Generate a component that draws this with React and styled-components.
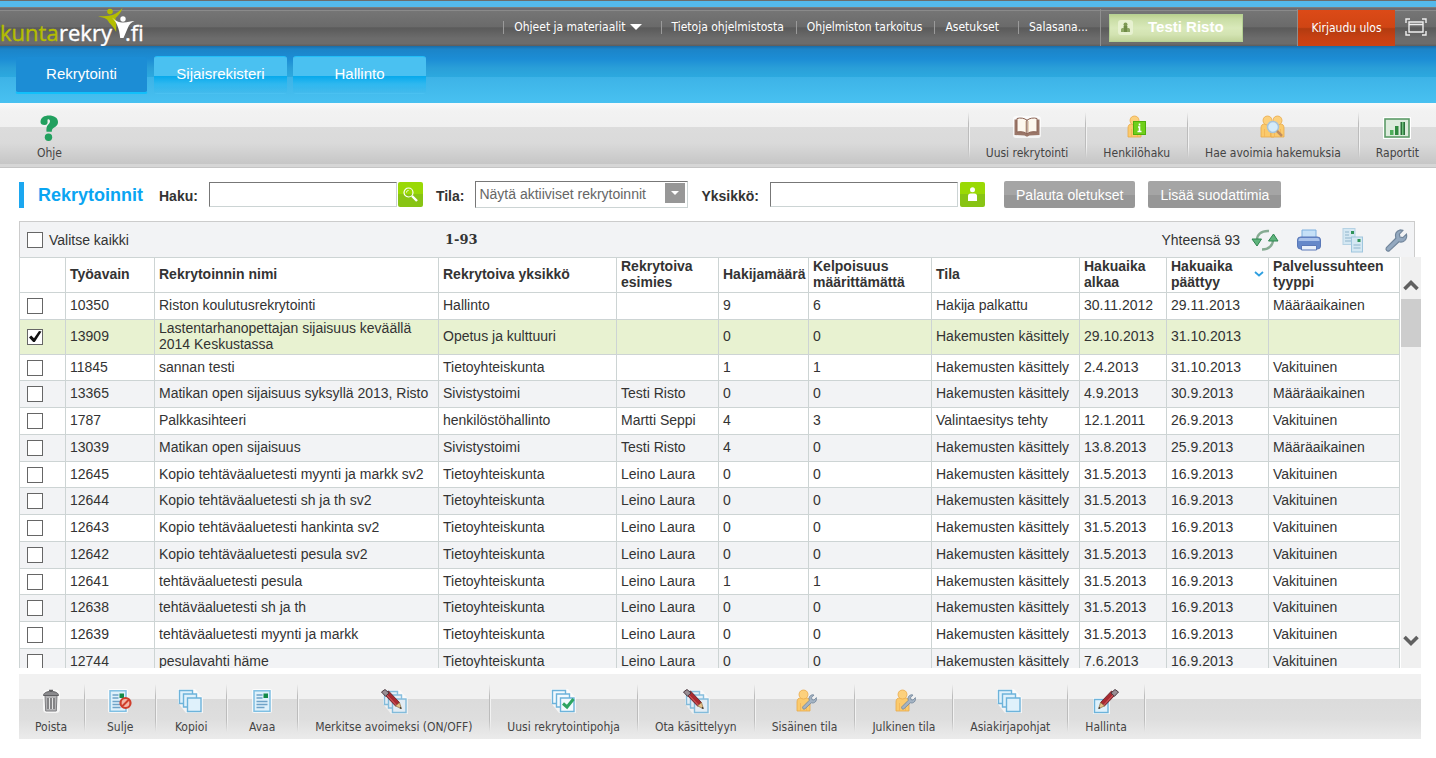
import React from "react";
import styled, { createGlobalStyle, css } from "styled-components";

const GlobalStyle = createGlobalStyle`
  *, *::before, *::after { box-sizing: border-box; }
  body {
    margin: 0;
    background: #fff;
    color: #333;
    font: 14px/16px "Liberation Sans", Arial, sans-serif;
  }
  button, input, select { font: inherit; margin: 0; }
  button { border: 0; padding: 0; background: none; color: inherit; cursor: pointer; }
  svg { display: block; flex: none; }
`;

const uiFont = `"DejaVu Sans Condensed", Tahoma, "DejaVu Sans", sans-serif`;

/* ---------- page frame ---------- */

const Page = styled.div`
  display: flex;
  flex-direction: column;
  height: 100vh;
  min-height: 480px;
  padding-bottom: 19px;
`;

const TopStripe = styled.div`
  flex: none;
  height: 7px;
  background: #54b9ec;
  border-top: 1px solid #6c6c6c;
`;

const Header = styled.header`
  flex: none;
  display: flex;
  justify-content: space-between;
  height: 39px;
  border-top: 1px solid #7d7d7d;
  background: linear-gradient(#6b6b72 0, #6b6b72 2px, #8a8a8a 2px, #8a8a8a 3px, #757575 3px, #6a6a6a 50%, #5a5a5a 52%, #6c6c6c 80%, #6c6c6c 94%, #5c5c5c 100%);
  color: #fff;
  font: 12px/16px ${uiFont};
`;

const TopMenu = styled.nav`
  display: flex;
  align-items: stretch;
`;

const MenuLink = styled.a`
  display: flex;
  align-items: center;
  gap: 4px;
  padding: 0 ${(p) => (p.$wide ? 19 : 12)}px 0 11px;
  color: #fff;
  text-decoration: none;
  white-space: nowrap;
  background: linear-gradient(#9a9a9a, #9a9a9a) left center / 1px 13px no-repeat;
`;

const UserArea = styled.div`
  display: flex;
  align-items: flex-start;
  width: 198px;
  padding: 5px 0 0 8px;
  margin-top: 1px;
  border-left: 1px solid #8f8f8f;
  border-right: 1px solid #8f8f8f;
`;

const UserBadge = styled.div`
  display: flex;
  align-items: center;
  gap: 15px;
  width: 134px;
  height: 28px;
  padding: 0 0 2px 8px;
  border: 1px solid #b5d194;
  background: linear-gradient(#bcd18f, #c9dda5 15%, #d9e9ba 50%, #d3e3b2 75%, #c2d49b);
  color: #fff;
  font: bold 15px/18px "Liberation Sans", Arial, sans-serif;
`;

const LogoutButton = styled.button`
  width: 97px;
  margin-top: 2px;
  background: linear-gradient(#dc4a17, #d04514 48%, #b23b10 52%, #c54013 75%, #cc4214);
  color: #fff;
  white-space: nowrap;
`;

const ScreenButton = styled.button`
  display: grid;
  place-items: center;
  width: 41px;
`;

const TabBar = styled.nav`
  flex: none;
  display: flex;
  gap: 6px;
  height: 57px;
  padding: 10px 15px 9px;
  background: linear-gradient(#1b6ba5 0, #1b84c8 3px, #1c8dd5 13px, #2a9fd8 22px, #2ca9df 31px, #3db3e7 31px, #48c1f1 100%);
`;

const Tab = styled.a`
  width: 133px;
  padding-top: 9px;
  border-radius: 3px;
  color: #fff;
  font-size: 15px;
  line-height: 16px;
  text-align: center;
  text-decoration: none;
  border: 1px solid transparent;
  border-top-color: #22bdf7;
  background: linear-gradient(#4ac1f1 0, #4ac1f1 19px, #06a9ec 19px, #2fb8ef 75%, #45c0f100 100%);
  ${(p) =>
    p.$active &&
    css`
      border-top-color: transparent;
      border-bottom: 2px solid #11c0fb;
      background: #1c8dd5 padding-box;
    `}
`;

/* ---------- icon tool bars ---------- */

const ToolBar = styled.div`
  flex: none;
  display: flex;
  align-items: flex-start;
  height: 65px;
  background: linear-gradient(#fafafa 0, #f2f2f2 8px, #f0f0f0 24px, #dcdcdc 24px, #dadada 40px, #c6c6c6 61px, #d6d6d6 61px, #d6d6d6 64px, #c4c4c4 64px);
`;

const ActionBar = styled(ToolBar)`
  margin: 6px 15px 0 19px;
  background: linear-gradient(#f1f1f1 0, #f1f1f1 25px, #dbdbdb 25px, #dedede 45px, #ebebeb 100%);
`;

const Spacer = styled.div`
  flex: 1;
`;

const ruleLine = "linear-gradient(#c4c4c400, #bcbcbc 25%, #bcbcbc 75%, #c4c4c400)";
const ruleGlow = "linear-gradient(#f6f6f600, #f2f2f2 25%, #f2f2f2 75%, #f6f6f600)";

const Tool = styled.button`
  display: flex;
  flex-direction: column;
  align-items: center;
  gap: 6px;
  height: 62px;
  padding: 12px 17px 0 18px;
  color: #444;
  font: 12px/16px ${uiFont};
  white-space: nowrap;
  background: ${ruleLine} 0 9px / 1px 46px no-repeat, ${ruleGlow} 1px 9px / 1px 46px no-repeat;
`;

const ActionTool = styled(Tool)`
  min-width: 71px;
  padding: 15px 19px 0 16px;
  background: ${ruleLine} calc(100% - 1px) 10px / 1px 48px no-repeat, ${ruleGlow} 100% 10px / 1px 48px no-repeat;
  &:first-child {
    min-width: 0;
  }
`;

const HelpTool = styled(Tool)`
  margin-left: 19px;
  background: none;
`;

/* ---------- filters ---------- */

const FilterRow = styled.form`
  flex: none;
  display: flex;
  align-items: center;
  height: 53px;
  padding-left: 19px;
`;

const Title = styled.h1`
  width: 140px;
  margin: 0;
  padding-left: 14px;
  border-left: 5px solid #1ba7f0;
  color: #0aa5f2;
  font-size: 18px;
  line-height: 26px;
`;

const Label = styled.label`
  margin-right: 11px;
  padding-top: 3px;
  font-weight: bold;
  white-space: nowrap;
`;

const TextInput = styled.input`
  width: 188px;
  height: 25px;
  padding: 0 4px;
  border: 1px solid #ccd4d4;
  border-top-color: #777;
  border-left-color: #777;
  background: #fff;
`;

const GreenButton = styled.button`
  display: grid;
  place-items: center;
  width: 25px;
  height: 25px;
  margin: 0 13px 0 ${(p) => (p.$apart ? 2 : 1)}px;
  border-radius: 2px;
  background: linear-gradient(#9ad905 50%, #88c414 50%);
`;

const SelectBox = styled.div`
  position: relative;
  margin-right: 13px;
`;

const Select = styled.select`
  appearance: none;
  display: block;
  width: 213px;
  height: 27px;
  padding: 0 26px 1px 3px;
  border: 1px solid #ccd4d4;
  border-top-color: #777;
  border-left-color: #777;
  border-radius: 0;
  background: #fff;
  color: #666;
`;

const SelectArrow = styled.span`
  position: absolute;
  top: 2px;
  right: 3px;
  display: grid;
  place-items: center;
  width: 20px;
  height: 20px;
  background: #979797;
  pointer-events: none;
`;

const GreyButton = styled.button`
  height: 27px;
  margin: 0 7px 0 6px;
  padding: 0 12px;
  border-radius: 2px;
  background: linear-gradient(#a5a5a5 50%, #979797 50%);
  color: #fff;
  white-space: nowrap;
`;

/* ---------- list ---------- */

const ListHead = styled.div`
  flex: none;
  display: flex;
  align-items: center;
  height: 36px;
  margin: 0 21px 0 19px;
  padding-left: 7px;
  border: 1px solid #ccc;
  border-bottom: 0;
  background: #f2f3f5;
`;

const SelectAll = styled.label`
  display: flex;
  align-items: center;
  gap: 6px;
  width: 418px;
`;

const Range = styled.strong`
  flex: 1;
  font: bold 13px/16px "DejaVu Serif", serif;
`;

const ListTools = styled.div`
  display: flex;
  align-items: center;
  gap: 16px;
  margin: 0 3px 0 11px;
`;

const ListTool = styled.button`
  display: block;
`;

const CheckWrap = styled.span`
  position: relative;
  display: block;
  width: 16px;
  height: 16px;
  svg {
    position: absolute;
    inset: 0;
    display: none;
    pointer-events: none;
  }
  input:checked + svg {
    display: block;
  }
`;

const CheckInput = styled.input`
  appearance: none;
  display: block;
  width: 16px;
  height: 16px;
  border: 1px solid #666;
  background: #fff;
`;

const ListBody = styled.div`
  flex: 1;
  display: flex;
  gap: 1px;
  min-height: 0;
  margin: 0 15px 0 19px;
`;

const TableView = styled.div`
  flex: 1;
  min-width: 0;
  overflow: hidden;
`;

const Table = styled.table`
  width: 100%;
  table-layout: fixed;
  border-collapse: separate;
  border-spacing: 0;
  border: 1px solid #cdd4d4;
  border-width: 1px 0 0 1px;
`;

const cell = css`
  padding: 0 4px 2px;
  border: 1px solid #cdd4d4;
  border-width: 0 1px 1px 0;
  text-align: left;
  vertical-align: middle;
`;

const Th = styled.th`
  ${cell}
  height: 35px;
`;

const Td = styled.td`
  ${cell}
`;

const CheckTd = styled(Td)`
  padding: 0 0 0 7px;
`;

const SortHead = styled.span`
  display: flex;
  align-items: center;
  justify-content: space-between;
`;

const Row = styled.tr`
  height: 27px;
  background: #fff;
  &:nth-child(even) {
    background: #f2f3f5;
  }
  &:nth-child(4n + 3) {
    height: 26px;
  }
  &&:has(input:checked) {
    background: #e8f2d1;
  }
`;

const ScrollBar = styled.div`
  flex: none;
  display: flex;
  flex-direction: column;
  width: 20px;
  padding: 18px 0 17px;
  background: #f0f0f0;
`;

const ScrollButton = styled.button`
  display: grid;
  place-items: center;
  height: 20px;
`;

const ScrollTrack = styled.div`
  flex: 1;
  padding-top: 4px;
`;

const ScrollThumb = styled.div`
  height: 48px;
  background: #cdcdcd;
`;

/* ---------- drawings ---------- */

const Logo = () => (
  <svg width="146" height="38" viewBox="0 8 146 38" role="img" aria-label="kuntarekry.fi">
    <g fontFamily="'Open Sans', 'Noto Sans', sans-serif" fontSize="22" strokeWidth=".4">
      <text x="0" y="41" fill="#b4bd00" stroke="#b4bd00">kunta</text>
      <text x="59" y="41" fill="#fff" stroke="#fff">rekry</text>
      <text x="125" y="41" fill="#fff" stroke="#fff">.fi</text>
    </g>
    <circle cx="110" cy="11.500" r="2.800" fill="#b4bd00" />
    <path d="M98 16.500c4-.6 8-.2 11-.8 6-1 9.500-3.500 13.500-7.700-1.500 4.500-3.500 7-7 10 .5 3.500.8 8 .7 14-2.200-4-4.500-7-7.200-9.500-1-3-4-5-11-6z" fill="#b4bd00" />
    <circle cx="123" cy="19" r="2.700" fill="#fff" />
    <path d="M112 17.500c4 4 7 5 11.500 5 4 0 7.500-1.200 11-1.500-3.500 1.800-5.500 3.500-6.500 6.500L123.500 38h-3.300c-.5-5-1.200-8.500-2.700-12-1-3-3-6-5.500-8.500z" fill="#fff" />
  </svg>
);

const Caret = ({ w = 12, h = 6 }) => (
  <svg width={w} height={h} viewBox="0 0 12 6">
    <path d="M0 0h12L6 6z" fill="#fff" />
  </svg>
);

const BadgeIcon = () => (
  <svg width="15" height="15" viewBox="0 0 15 15">
    <rect width="15" height="15" rx="3" fill="#e7f1d0" />
    <circle cx="7.500" cy="4.500" r="2" fill="#7f9a55" />
    <path d="M3 12V9.500Q3 8 4.500 8h1V6h4v2h1Q12 8 12 9.500V12z" fill="#8ca664" />
    <path d="M6 6h3v6H6z" fill="#6f8b46" />
  </svg>
);

const ScreenIcon = () => (
  <svg width="22" height="18" viewBox="0 0 22 18" fill="none" stroke="#eee" strokeWidth="1.400">
    <path d="M1 5V1h4M17 1h4v4M21 13v4h-4M5 17H1v-4" />
    <path d="M4 4h14v10H4zM4 6.500h14" />
  </svg>
);

const HelpIcon = () => (
  <svg width="24" height="26" viewBox="0 0 24 26">
    <circle cx="11.500" cy="22.300" r="3.700" fill="#22a05f" />
    <path d="M3.500 7C3.500 2.500 7.500.5 12 .5c5 0 9 2.300 9 6.500 0 3.500-2.500 4.800-4.500 6-1.500 1-1.500 1.500-1.700 3.700H9.500c-.3-4.500.5-6 2-7.500 1.300-1.200 1.800-2.700 1.300-4-.8-1.300-2.500-1-2.300.3.500 3-.5 4.500-3 4.500C5 10 3.500 9 3.500 7z" fill="#22a05f" />
  </svg>
);

const BookIcon = () => (
  <svg width="28" height="24" viewBox="0 0 28 24">
    <rect x="0" y="1" width="28" height="22" rx="3" fill="#fff" opacity=".7" />
    <path d="M1.500 4.500h25V20l-10 .5-2.500 1.200-2.500-1.200-10-.5z" fill="#9a7668" />
    <path d="M14 5.500c-2-2.500-7-3-10-2V17c4-.7 8-.3 10 2z" fill="#fdf7ee" stroke="#8a6355" />
    <path d="M14 5.500c2-2.500 7-3 10-2V17c-4-.7-8-.3-10 2z" fill="#fdf7ee" stroke="#8a6355" />
    <path d="M12.500 6v11M15.500 6v11" stroke="#e6d3bd" />
  </svg>
);

const Person = ({ x = 0 }) => (
  <g transform={`translate(${x} 0)`} fill="#fbca6c" stroke="#e9a94a" strokeWidth=".8">
    <path d="M0 22v-9c0-3 1.500-4 3.500-4h6c2 0 3.500 1 3.500 4v9z" />
    <circle cx="6.500" cy="5.500" r="4.500" fill="#fcd07c" />
    <path d="M3.500 14v8M9.500 14v8" stroke="#f3b455" fill="none" />
  </g>
);

const PersonInfoIcon = () => (
  <svg width="24" height="24" viewBox="0 0 24 24">
    <Person x={3} />
    <rect x="8.500" y="6.500" width="12" height="13" fill="#6fcf1a" stroke="#4fae0c" />
    <path d="M14.500 8.500v2M13 12h1.500v4.500M12.500 16.500h4" stroke="#fff" strokeWidth="1.600" fill="none" />
  </svg>
);

const PeopleSearchIcon = () => (
  <svg width="26" height="24" viewBox="0 0 26 24">
    <Person x={1} />
    <Person x={11} />
    <circle cx="13" cy="12" r="5.500" fill="#d3ebfa" stroke="#a8c3d8" strokeWidth="1.500" />
    <path d="M17 16l5 5" stroke="#c08d5e" strokeWidth="2.500" />
  </svg>
);

const ChartIcon = () => (
  <svg width="28" height="24" viewBox="0 0 28 24">
    <rect x="0" y="2" width="28" height="22" fill="#fff" />
    <rect x="2" y="4" width="24" height="18" fill="#dcebdc" stroke="#5d9b68" strokeWidth="1.600" />
    <path d="M7 15h3.500v5H7z" fill="#4fae5b" />
    <path d="M12 11h3.500v9H12z" fill="#2f8a3e" />
    <path d="M17.500 7H22v13h-4.500z" fill="#2b6f3a" />
    <path d="M19 7h1.500v13H19z" fill="#6dc07a" />
  </svg>
);

const TrashIcon = () => (
  <svg width="24" height="24" viewBox="0 0 24 24">
    <rect x="4" y="1" width="17" height="23" rx="4" fill="#fff" opacity=".7" />
    <path d="M6 6h12l-.7 16H6.700z" fill="#b4b4b6" stroke="#7d7d80" />
    <path d="M9 9v11M12 9v11M15 9v11" stroke="#6a6a6d" strokeWidth="1.300" />
    <path d="M10.500 9v11M13.500 9v11" stroke="#e2e2e2" />
    <path d="M4.500 6.500C4.500 4 7.500 2.500 12 2.500s7.500 1.500 7.500 4z" fill="#8b8b8e" stroke="#5f5f62" />
    <path d="M10 1.500h4" stroke="#5f5f62" strokeWidth="1.500" />
  </svg>
);

const Doc = ({ x = 3 }) => (
  <g transform={`translate(${x} 1)`}>
    <rect x="-1" y="-1" width="20" height="24" rx="2" fill="#fff" opacity=".8" />
    <rect x="1" y=".8" width="16" height="20.500" fill="#dff1fb" stroke="#7fbfe2" strokeWidth="1.500" />
    <path d="M3.500 5h6M3.500 8h6M3.500 11.500h11M3.500 14.500h11M3.500 17.500h8" stroke="#6fa3c8" strokeWidth="1.300" />
    <rect x="10.500" y="3.500" width="4.500" height="4.500" fill="#148a48" />
  </g>
);

const CloseDocIcon = () => (
  <svg width="26" height="24" viewBox="0 0 26 24">
    <Doc x={2} />
    <circle cx="18.500" cy="14" r="5" fill="#f4b7a8" stroke="#cf3e2c" strokeWidth="2.200" />
    <path d="M15 17.500l7-7" stroke="#cf3e2c" strokeWidth="2" />
  </svg>
);

const DocIcon = () => (
  <svg width="24" height="24" viewBox="0 0 24 24">
    <Doc />
  </svg>
);

const Sheets = ({ fill = "#dff1fb" }) => (
  <g stroke="#6db3da" strokeWidth="1.400" fill={fill}>
    <path d="M0 0h17l8 9v15H8L0 14z" fill="#fff" stroke="none" opacity=".7" />
    <path d="M1.500 1.500h13v13h-13z" />
    <path d="M5.500 5h13v13h-13z" />
    <path d="M9.500 9h13.500v13.500H9.500z" />
  </g>
);

const CopyIcon = () => (
  <svg width="26" height="25" viewBox="0 0 26 25">
    <Sheets />
  </svg>
);

const CheckSheetsIcon = () => (
  <svg width="26" height="25" viewBox="0 0 26 25">
    <Sheets fill="#f3fafe" />
    <path d="M12 14.500l4 3.500 6.500-8" fill="none" stroke="#2ea561" strokeWidth="3" />
  </svg>
);

const Pencil = () => (
  <g>
    <path d="M4.500 5.500L8.500 2l11 11.500-4 3.500z" fill="#a92a30" stroke="#5c1a22" strokeWidth=".8" />
    <path d="M5.500 4.700l11 11.500" stroke="#d9656a" />
    <path d="M1.500 3L5 .5l4 3.500-3.500 3.300z" fill="#9a8f95" stroke="#4b3840" />
    <path d="M15.500 17l4-3.500 1.800 6z" fill="#e8c389" stroke="#8a6a3f" strokeWidth=".7" />
    <path d="M21.500 20l-2-.8 1.500-1.400z" fill="#222" />
  </g>
);

const PencilSheetsIcon = () => (
  <svg width="28" height="25" viewBox="0 0 28 25">
    <g transform="translate(3 1)" opacity=".8">
      <Sheets fill="#e4f0fa" />
    </g>
    <Pencil />
  </svg>
);

const EditIcon = () => (
  <svg width="28" height="26" viewBox="0 0 28 26">
    <rect x="1" y="9" width="17" height="16" fill="#fff" opacity=".7" />
    <rect x="2.500" y="10.500" width="13.500" height="13" fill="#dff1fb" stroke="#6db3da" strokeWidth="1.400" />
    <g transform="translate(28 0) scale(-1 1)">
      <Pencil />
    </g>
  </svg>
);

const WrenchPath = ({ fill = "#a4b3c3" }) => (
  <path d="M3.500 18.500l8-8C10.500 7 12 4.500 15 3.500c1 0 2 0 2.500.3l-3 3.200.5 2.500 2.500.5 3-3c.5 2 0 4-1.500 5.500-1.500 1.300-3 1.500-4.800 1L6 21.200c-1.800 1-3.500-1-2.500-2.700z" fill={fill} stroke="#71859b" />
);

const PersonWrenchIcon = () => (
  <svg width="24" height="24" viewBox="0 0 24 24">
    <Person x={4} />
    <g transform="translate(7 3) scale(.8)">
      <WrenchPath />
    </g>
  </svg>
);

const RefreshIcon = () => (
  <svg width="28" height="24" viewBox="0 0 28 24" fill="none">
    <path d="M6 12c0-5 4-9.500 12-9" stroke="#86ab92" strokeWidth="2.400" />
    <path d="M1 11h9.500L6 18z" fill="#5fb47c" stroke="#2f8450" />
    <path d="M22 12c0 5-4 9.500-11 9.500" stroke="#86ab92" strokeWidth="2.400" />
    <path d="M17.500 13H27l-4.500-7z" fill="#5fb47c" stroke="#2f8450" />
  </svg>
);

const PrintIcon = () => (
  <svg width="28" height="24" viewBox="0 0 28 24">
    <path d="M7 2h14v9H7z" fill="#c5e0f7" stroke="#7fb0de" />
    <path d="M2.500 12q0-3 3-3h17q3 0 3 3v6q0 3-3 3h-17q-3 0-3-3z" fill="#6588c9" stroke="#5a78b8" />
    <path d="M3.500 12q0-2 2-2h17q2 0 2 2v1h-21z" fill="#a9c2ea" />
    <path d="M6.500 17.500h15V22h-15z" fill="#e9f0fa" stroke="#5a78b8" />
  </svg>
);

const ExportIcon = () => (
  <svg width="28" height="26" viewBox="0 0 28 26">
    <rect x="4" y="1.500" width="12" height="16" fill="#d5e8f3" stroke="#b5d2e4" />
    <path d="M6 5h4M6 8h4M6 11h8M6 14h8" stroke="#8fb4cb" />
    <rect x="12" y="4" width="3" height="3" fill="#2f9458" />
    <rect x="12.500" y="10" width="11" height="15" fill="#d5e8f3" stroke="#9fc6de" />
    <path d="M14.500 18h7M14.500 21h7" stroke="#8fb4cb" />
    <rect x="18.500" y="12" width="3" height="3" fill="#2f9458" />
  </svg>
);

const WrenchIcon = () => (
  <svg width="28" height="26" viewBox="1 1 23 22">
    <WrenchPath fill="#94a9c0" />
  </svg>
);

const SearchIcon = () => (
  <svg width="15" height="15" viewBox="0 0 15 15" fill="none" stroke="#fff">
    <circle cx="5.500" cy="5.500" r="4.500" strokeWidth="1.200" />
    <path d="M3.500 5.500c0-1.200.8-2 2-2" />
    <path d="M9 9l5 5" strokeWidth="2.400" />
  </svg>
);

const UnitIcon = () => (
  <svg width="11" height="15" viewBox="0 0 11 15" fill="#fff">
    <circle cx="5.500" cy="2.800" r="2.500" />
    <path d="M1 14V9q0-2.500 2.500-2.500h4Q10 6.500 10 9v5z" />
  </svg>
);

const SortIcon = () => (
  <svg width="10" height="6" viewBox="0 0 10 6" fill="none" stroke="#2e9fe0" strokeWidth="1.800">
    <path d="M1 1l4 3.500L9 1" />
  </svg>
);

const ScrollChevron = ({ up }) => (
  <svg width="16" height="12" viewBox="0 0 16 12" fill="none" stroke="#606060" strokeWidth="3.600">
    <path d={up ? "M1.500 10L8 3.500l6.500 6.500" : "M1.500 2L8 8.500 14.500 2"} />
  </svg>
);

/* ---------- data ---------- */

const columns = [
  { label: "", width: 46 },
  { label: "Työavain", width: 89 },
  { label: "Rekrytoinnin nimi" },
  { label: "Rekrytoiva yksikkö", width: 178 },
  { label: "Rekrytoiva esimies", width: 102 },
  { label: "Hakijamäärä", width: 90 },
  { label: "Kelpoisuus määrittämättä", width: 123 },
  { label: "Tila", width: 148 },
  { label: "Hakuaika alkaa", width: 87 },
  { label: "Hakuaika päättyy", width: 102, sorted: true },
  { label: "Palvelussuhteen tyyppi", width: 131 },
];

const rows = [
  ["10350", "Riston koulutusrekrytointi", "Hallinto", "", "9", "6", "Hakija palkattu", "30.11.2012", "29.11.2013", "Määräaikainen"],
  ["13909", "Lastentarhanopettajan sijaisuus keväällä 2014 Keskustassa", "Opetus ja kulttuuri", "", "0", "0", "Hakemusten käsittely", "29.10.2013", "31.10.2013", ""],
  ["11845", "sannan testi", "Tietoyhteiskunta", "", "1", "1", "Hakemusten käsittely", "2.4.2013", "31.10.2013", "Vakituinen"],
  ["13365", "Matikan open sijaisuus syksyllä 2013, Risto", "Sivistystoimi", "Testi Risto", "0", "0", "Hakemusten käsittely", "4.9.2013", "30.9.2013", "Määräaikainen"],
  ["1787", "Palkkasihteeri", "henkilöstöhallinto", "Martti Seppi", "4", "3", "Valintaesitys tehty", "12.1.2011", "26.9.2013", "Vakituinen"],
  ["13039", "Matikan open sijaisuus", "Sivistystoimi", "Testi Risto", "4", "0", "Hakemusten käsittely", "13.8.2013", "25.9.2013", "Määräaikainen"],
  ["12645", "Kopio tehtäväaluetesti myynti ja markk sv2", "Tietoyhteiskunta", "Leino Laura", "0", "0", "Hakemusten käsittely", "31.5.2013", "16.9.2013", "Vakituinen"],
  ["12644", "Kopio tehtäväaluetesti sh ja th sv2", "Tietoyhteiskunta", "Leino Laura", "0", "0", "Hakemusten käsittely", "31.5.2013", "16.9.2013", "Vakituinen"],
  ["12643", "Kopio tehtäväaluetesti hankinta sv2", "Tietoyhteiskunta", "Leino Laura", "0", "0", "Hakemusten käsittely", "31.5.2013", "16.9.2013", "Vakituinen"],
  ["12642", "Kopio tehtäväaluetesti pesula sv2", "Tietoyhteiskunta", "Leino Laura", "0", "0", "Hakemusten käsittely", "31.5.2013", "16.9.2013", "Vakituinen"],
  ["12641", "tehtäväaluetesti pesula", "Tietoyhteiskunta", "Leino Laura", "1", "1", "Hakemusten käsittely", "31.5.2013", "16.9.2013", "Vakituinen"],
  ["12638", "tehtäväaluetesti sh ja th", "Tietoyhteiskunta", "Leino Laura", "0", "0", "Hakemusten käsittely", "31.5.2013", "16.9.2013", "Vakituinen"],
  ["12639", "tehtäväaluetesti myynti ja markk", "Tietoyhteiskunta", "Leino Laura", "0", "0", "Hakemusten käsittely", "31.5.2013", "16.9.2013", "Vakituinen"],
  ["12744", "pesulavahti häme", "Tietoyhteiskunta", "Leino Laura", "0", "0", "Hakemusten käsittely", "7.6.2013", "16.9.2013", "Vakituinen"],
];

const topTools = [
  ["Uusi rekrytointi", BookIcon],
  ["Henkilöhaku", PersonInfoIcon],
  ["Hae avoimia hakemuksia", PeopleSearchIcon],
  ["Raportit", ChartIcon],
];

const actions = [
  ["Poista", TrashIcon],
  ["Sulje", CloseDocIcon],
  ["Kopioi", CopyIcon],
  ["Avaa", DocIcon],
  ["Merkitse avoimeksi (ON/OFF)", PencilSheetsIcon],
  ["Uusi rekrytointipohja", CheckSheetsIcon],
  ["Ota käsittelyyn", PencilSheetsIcon],
  ["Sisäinen tila", PersonWrenchIcon],
  ["Julkinen tila", PersonWrenchIcon],
  ["Asiakirjapohjat", CopyIcon],
  ["Hallinta", EditIcon],
];

const IconSlot = styled.span`
  display: grid;
  place-items: center;
  height: 24px;
`;

const Check = (props) => (
  <CheckWrap>
    <CheckInput type="checkbox" {...props} />
    <svg width="16" height="16" viewBox="0 0 16 16">
      <path d="M2 8.500L4.200 6.500 7 9.200 12 2l2.500.6L7.800 13H6.200z" fill="#111" />
    </svg>
  </CheckWrap>
);

export default function App() {
  return (
    <>
      <GlobalStyle />
      <Page>
        <TopStripe />
        <Header>
          <Logo />
          <TopMenu>
            <MenuLink href="#ohjeet" $wide>
              Ohjeet ja materiaalit <Caret />
            </MenuLink>
            <MenuLink href="#tietoja">Tietoja ohjelmistosta</MenuLink>
            <MenuLink href="#tarkoitus">Ohjelmiston tarkoitus</MenuLink>
            <MenuLink href="#asetukset" $wide>Asetukset</MenuLink>
            <MenuLink href="#salasana">Salasana...</MenuLink>
            <UserArea>
              <UserBadge>
                <BadgeIcon />
                Testi Risto
              </UserBadge>
            </UserArea>
            <LogoutButton type="button">Kirjaudu ulos</LogoutButton>
            <ScreenButton type="button" aria-label="Koko näyttö">
              <ScreenIcon />
            </ScreenButton>
          </TopMenu>
        </Header>
        <TabBar>
          <Tab href="#rekrytointi" $active>Rekrytointi</Tab>
          <Tab href="#sijaisrekisteri">Sijaisrekisteri</Tab>
          <Tab href="#hallinto">Hallinto</Tab>
        </TabBar>
        <ToolBar>
          <HelpTool type="button">
            <IconSlot><HelpIcon /></IconSlot>
            Ohje
          </HelpTool>
          <Spacer />
          {topTools.map(([label, Icon]) => (
            <Tool type="button" key={label}>
              <IconSlot><Icon /></IconSlot>
              {label}
            </Tool>
          ))}
        </ToolBar>

        <FilterRow onSubmit={(e) => e.preventDefault()}>
          <Title>Rekrytoinnit</Title>
          <Label htmlFor="haku">Haku:</Label>
          <TextInput id="haku" type="text" />
          <GreenButton type="submit" aria-label="Hae"><SearchIcon /></GreenButton>
          <Label htmlFor="tila">Tila:</Label>
          <SelectBox>
            <Select id="tila">
              <option>Näytä aktiiviset rekrytoinnit</option>
            </Select>
            <SelectArrow><Caret w={8} h={4} /></SelectArrow>
          </SelectBox>
          <Label htmlFor="yksikko">Yksikkö:</Label>
          <TextInput id="yksikko" type="text" />
          <GreenButton type="button" $apart aria-label="Valitse yksikkö"><UnitIcon /></GreenButton>
          <GreyButton type="reset">Palauta oletukset</GreyButton>
          <GreyButton type="button">Lisää suodattimia</GreyButton>
        </FilterRow>

        <ListHead>
          <SelectAll>
            <Check /> Valitse kaikki
          </SelectAll>
          <Range>1-93</Range>
          <span>Yhteensä 93</span>
          <ListTools>
            <ListTool type="button" aria-label="Päivitä"><RefreshIcon /></ListTool>
            <ListTool type="button" aria-label="Tulosta"><PrintIcon /></ListTool>
            <ListTool type="button" aria-label="Vie"><ExportIcon /></ListTool>
            <ListTool type="button" aria-label="Asetukset"><WrenchIcon /></ListTool>
          </ListTools>
        </ListHead>
        <ListBody>
          <TableView>
            <Table>
              <colgroup>
                {columns.map((c) => (
                  <col key={c.label} width={c.width} />
                ))}
              </colgroup>
              <thead>
                <tr>
                  {columns.map((c) => (
                    <Th key={c.label} scope="col">
                      {c.sorted ? (
                        <SortHead>
                          {c.label} <SortIcon />
                        </SortHead>
                      ) : (
                        c.label
                      )}
                    </Th>
                  ))}
                </tr>
              </thead>
              <tbody>
                {rows.map((r) => (
                  <Row key={r[0]}>
                    <CheckTd>
                      <Check aria-label={r[0]} defaultChecked={r[0] === "13909"} />
                    </CheckTd>
                    {r.map((v, i) => (
                      <Td key={i}>{v}</Td>
                    ))}
                  </Row>
                ))}
              </tbody>
            </Table>
          </TableView>
          <ScrollBar>
            <ScrollButton type="button" aria-label="Ylös"><ScrollChevron up /></ScrollButton>
            <ScrollTrack>
              <ScrollThumb />
            </ScrollTrack>
            <ScrollButton type="button" aria-label="Alas"><ScrollChevron /></ScrollButton>
          </ScrollBar>
        </ListBody>
        <ActionBar>
          {actions.map(([label, Icon]) => (
            <ActionTool type="button" key={label}>
              <IconSlot><Icon /></IconSlot>
              {label}
            </ActionTool>
          ))}
        </ActionBar>
      </Page>
    </>
  );
}
